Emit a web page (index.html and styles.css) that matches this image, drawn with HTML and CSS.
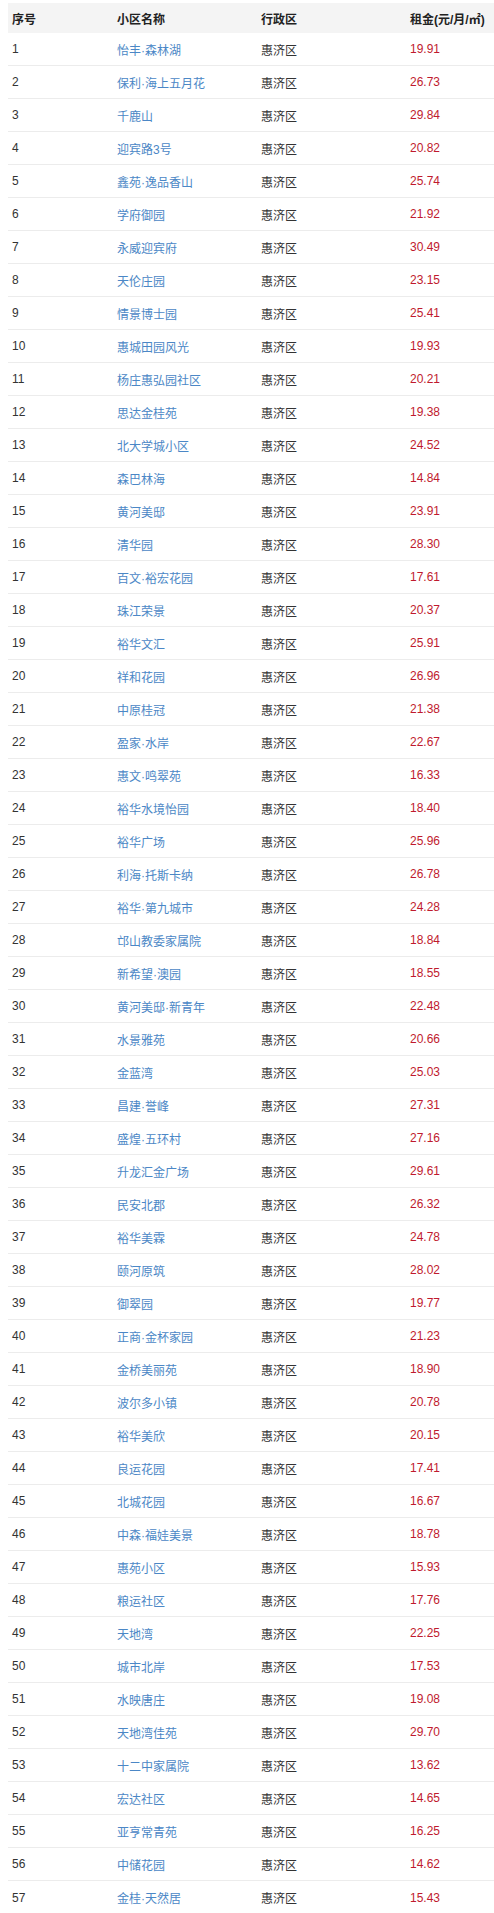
FILE: index.html
```html
<!DOCTYPE html>
<html lang="zh-CN">
<head>
<meta charset="utf-8">
<title>惠济区小区租金</title>
<link rel="stylesheet" href="styles.css">
</head>
<body>
<div class="table">
  <div class="row head"><div class="c1">序号</div><div class="c2">小区名称</div><div class="c3">行政区</div><div class="c4">租金(元/月/㎡)</div></div>
  <div class="row"><div class="c1">1</div><div class="c2 link">怡丰·森林湖</div><div class="c3">惠济区</div><div class="c4 price">19.91</div></div>
  <div class="row"><div class="c1">2</div><div class="c2 link">保利·海上五月花</div><div class="c3">惠济区</div><div class="c4 price">26.73</div></div>
  <div class="row"><div class="c1">3</div><div class="c2 link">千鹿山</div><div class="c3">惠济区</div><div class="c4 price">29.84</div></div>
  <div class="row"><div class="c1">4</div><div class="c2 link">迎宾路3号</div><div class="c3">惠济区</div><div class="c4 price">20.82</div></div>
  <div class="row"><div class="c1">5</div><div class="c2 link">鑫苑·逸品香山</div><div class="c3">惠济区</div><div class="c4 price">25.74</div></div>
  <div class="row"><div class="c1">6</div><div class="c2 link">学府御园</div><div class="c3">惠济区</div><div class="c4 price">21.92</div></div>
  <div class="row"><div class="c1">7</div><div class="c2 link">永威迎宾府</div><div class="c3">惠济区</div><div class="c4 price">30.49</div></div>
  <div class="row"><div class="c1">8</div><div class="c2 link">天伦庄园</div><div class="c3">惠济区</div><div class="c4 price">23.15</div></div>
  <div class="row"><div class="c1">9</div><div class="c2 link">情景博士园</div><div class="c3">惠济区</div><div class="c4 price">25.41</div></div>
  <div class="row"><div class="c1">10</div><div class="c2 link">惠城田园风光</div><div class="c3">惠济区</div><div class="c4 price">19.93</div></div>
  <div class="row"><div class="c1">11</div><div class="c2 link">杨庄惠弘园社区</div><div class="c3">惠济区</div><div class="c4 price">20.21</div></div>
  <div class="row"><div class="c1">12</div><div class="c2 link">思达金桂苑</div><div class="c3">惠济区</div><div class="c4 price">19.38</div></div>
  <div class="row"><div class="c1">13</div><div class="c2 link">北大学城小区</div><div class="c3">惠济区</div><div class="c4 price">24.52</div></div>
  <div class="row"><div class="c1">14</div><div class="c2 link">森巴林海</div><div class="c3">惠济区</div><div class="c4 price">14.84</div></div>
  <div class="row"><div class="c1">15</div><div class="c2 link">黄河美邸</div><div class="c3">惠济区</div><div class="c4 price">23.91</div></div>
  <div class="row"><div class="c1">16</div><div class="c2 link">清华园</div><div class="c3">惠济区</div><div class="c4 price">28.30</div></div>
  <div class="row"><div class="c1">17</div><div class="c2 link">百文·裕宏花园</div><div class="c3">惠济区</div><div class="c4 price">17.61</div></div>
  <div class="row"><div class="c1">18</div><div class="c2 link">珠江荣景</div><div class="c3">惠济区</div><div class="c4 price">20.37</div></div>
  <div class="row"><div class="c1">19</div><div class="c2 link">裕华文汇</div><div class="c3">惠济区</div><div class="c4 price">25.91</div></div>
  <div class="row"><div class="c1">20</div><div class="c2 link">祥和花园</div><div class="c3">惠济区</div><div class="c4 price">26.96</div></div>
  <div class="row"><div class="c1">21</div><div class="c2 link">中原桂冠</div><div class="c3">惠济区</div><div class="c4 price">21.38</div></div>
  <div class="row"><div class="c1">22</div><div class="c2 link">盈家·水岸</div><div class="c3">惠济区</div><div class="c4 price">22.67</div></div>
  <div class="row"><div class="c1">23</div><div class="c2 link">惠文·鸣翠苑</div><div class="c3">惠济区</div><div class="c4 price">16.33</div></div>
  <div class="row"><div class="c1">24</div><div class="c2 link">裕华水境怡园</div><div class="c3">惠济区</div><div class="c4 price">18.40</div></div>
  <div class="row"><div class="c1">25</div><div class="c2 link">裕华广场</div><div class="c3">惠济区</div><div class="c4 price">25.96</div></div>
  <div class="row"><div class="c1">26</div><div class="c2 link">利海·托斯卡纳</div><div class="c3">惠济区</div><div class="c4 price">26.78</div></div>
  <div class="row"><div class="c1">27</div><div class="c2 link">裕华·第九城市</div><div class="c3">惠济区</div><div class="c4 price">24.28</div></div>
  <div class="row"><div class="c1">28</div><div class="c2 link">邙山教委家属院</div><div class="c3">惠济区</div><div class="c4 price">18.84</div></div>
  <div class="row"><div class="c1">29</div><div class="c2 link">新希望·澳园</div><div class="c3">惠济区</div><div class="c4 price">18.55</div></div>
  <div class="row"><div class="c1">30</div><div class="c2 link">黄河美邸·新青年</div><div class="c3">惠济区</div><div class="c4 price">22.48</div></div>
  <div class="row"><div class="c1">31</div><div class="c2 link">水景雅苑</div><div class="c3">惠济区</div><div class="c4 price">20.66</div></div>
  <div class="row"><div class="c1">32</div><div class="c2 link">金蓝湾</div><div class="c3">惠济区</div><div class="c4 price">25.03</div></div>
  <div class="row"><div class="c1">33</div><div class="c2 link">昌建·誉峰</div><div class="c3">惠济区</div><div class="c4 price">27.31</div></div>
  <div class="row"><div class="c1">34</div><div class="c2 link">盛煌·五环村</div><div class="c3">惠济区</div><div class="c4 price">27.16</div></div>
  <div class="row"><div class="c1">35</div><div class="c2 link">升龙汇金广场</div><div class="c3">惠济区</div><div class="c4 price">29.61</div></div>
  <div class="row"><div class="c1">36</div><div class="c2 link">民安北郡</div><div class="c3">惠济区</div><div class="c4 price">26.32</div></div>
  <div class="row"><div class="c1">37</div><div class="c2 link">裕华美霖</div><div class="c3">惠济区</div><div class="c4 price">24.78</div></div>
  <div class="row"><div class="c1">38</div><div class="c2 link">颐河原筑</div><div class="c3">惠济区</div><div class="c4 price">28.02</div></div>
  <div class="row"><div class="c1">39</div><div class="c2 link">御翠园</div><div class="c3">惠济区</div><div class="c4 price">19.77</div></div>
  <div class="row"><div class="c1">40</div><div class="c2 link">正商·金杯家园</div><div class="c3">惠济区</div><div class="c4 price">21.23</div></div>
  <div class="row"><div class="c1">41</div><div class="c2 link">金桥美丽苑</div><div class="c3">惠济区</div><div class="c4 price">18.90</div></div>
  <div class="row"><div class="c1">42</div><div class="c2 link">波尔多小镇</div><div class="c3">惠济区</div><div class="c4 price">20.78</div></div>
  <div class="row"><div class="c1">43</div><div class="c2 link">裕华美欣</div><div class="c3">惠济区</div><div class="c4 price">20.15</div></div>
  <div class="row"><div class="c1">44</div><div class="c2 link">良运花园</div><div class="c3">惠济区</div><div class="c4 price">17.41</div></div>
  <div class="row"><div class="c1">45</div><div class="c2 link">北城花园</div><div class="c3">惠济区</div><div class="c4 price">16.67</div></div>
  <div class="row"><div class="c1">46</div><div class="c2 link">中森·福娃美景</div><div class="c3">惠济区</div><div class="c4 price">18.78</div></div>
  <div class="row"><div class="c1">47</div><div class="c2 link">惠苑小区</div><div class="c3">惠济区</div><div class="c4 price">15.93</div></div>
  <div class="row"><div class="c1">48</div><div class="c2 link">粮运社区</div><div class="c3">惠济区</div><div class="c4 price">17.76</div></div>
  <div class="row"><div class="c1">49</div><div class="c2 link">天地湾</div><div class="c3">惠济区</div><div class="c4 price">22.25</div></div>
  <div class="row"><div class="c1">50</div><div class="c2 link">城市北岸</div><div class="c3">惠济区</div><div class="c4 price">17.53</div></div>
  <div class="row"><div class="c1">51</div><div class="c2 link">水映唐庄</div><div class="c3">惠济区</div><div class="c4 price">19.08</div></div>
  <div class="row"><div class="c1">52</div><div class="c2 link">天地湾佳苑</div><div class="c3">惠济区</div><div class="c4 price">29.70</div></div>
  <div class="row"><div class="c1">53</div><div class="c2 link">十二中家属院</div><div class="c3">惠济区</div><div class="c4 price">13.62</div></div>
  <div class="row"><div class="c1">54</div><div class="c2 link">宏达社区</div><div class="c3">惠济区</div><div class="c4 price">14.65</div></div>
  <div class="row"><div class="c1">55</div><div class="c2 link">亚亨常青苑</div><div class="c3">惠济区</div><div class="c4 price">16.25</div></div>
  <div class="row"><div class="c1">56</div><div class="c2 link">中储花园</div><div class="c3">惠济区</div><div class="c4 price">14.62</div></div>
  <div class="row last"><div class="c1">57</div><div class="c2 link">金桂·天然居</div><div class="c3">惠济区</div><div class="c4 price">15.43</div></div>
</div>
</body>
</html>
```
FILE: styles.css
```css
html, body {
  margin: 0;
  padding: 0;
  background: #ffffff;
}
body {
  padding: 3px 0 0 8px;
  font-family: "Liberation Sans", "Noto Sans CJK SC", sans-serif;
  font-size: 12px;
  color: #333333;
}
.table {
  display: flex;
  flex-direction: column;
}
.row {
  display: grid;
  grid-template-columns: 105px 144px 149px 1fr;
  align-items: center;
  height: 33px;
  box-sizing: border-box;
  border-bottom: 1px solid #ececec;
  white-space: nowrap;
}
.row > div {
  padding-left: 4px;
}
.row.head {
  height: 30px;
  background: #f4f4f4;
  border-bottom: none;
  font-weight: bold;
  color: #222222;
}
.row.last {
  border-bottom: none;
}
.link {
  color: #4b87c6;
}
.price {
  color: #bf1a2e;
}
```
